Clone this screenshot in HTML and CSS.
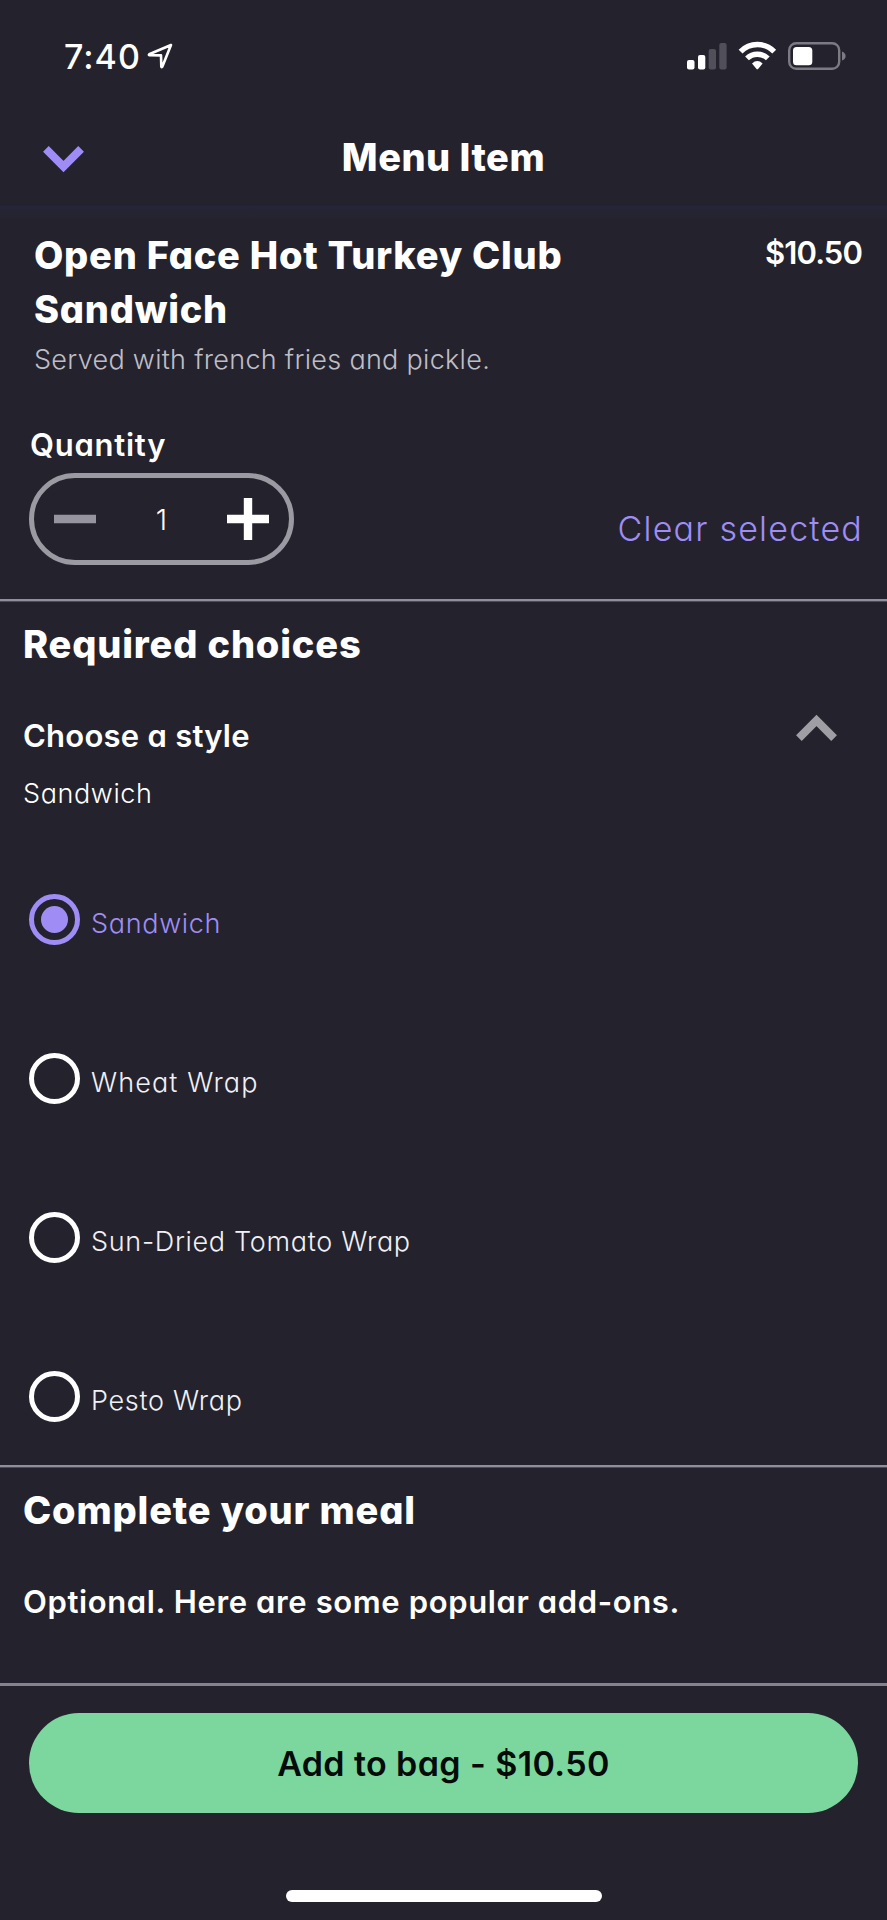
FILE: index.html
```html
<!DOCTYPE html>
<html lang="en">
<head>
<meta charset="utf-8">
<title>Menu Item</title>
<link rel="stylesheet" href="styles.css">
</head>
<body>
<div class="screen">
  <header class="top">
    <div class="status">
      <span class="time">7:40</span>
      <svg class="location" width="26" height="26" viewBox="0 0 26 26"><path d="M24 2 L2.2 11.3 Q1.5 12 2.4 12.2 L14 12.4 L14.3 23.6 Q14.8 24.6 15.4 23.6 Z" fill="none" stroke="#fff" stroke-width="2.6" stroke-linejoin="round"/></svg>
      <svg class="indicators" width="162" height="32" viewBox="0 0 162 32">
        <g fill="#fff"><rect x="1" y="20" width="7.5" height="9.5" rx="2"/><rect x="12" y="15" width="7.3" height="14.5" rx="2"/></g>
        <g fill="#504f5a"><rect x="22.7" y="9" width="7.3" height="20.5" rx="2"/><rect x="33.3" y="3" width="7.3" height="26.5" rx="2"/></g>
        <g fill="none" stroke="#fff" stroke-width="5.4"><path d="M54.6 11.6 A23.5 23.5 0 0 1 88.2 11.6"/><path d="M61 18.4 A15 15 0 0 1 81.8 18.4"/></g>
        <path d="M66 23.4 Q71.3 18.6 76.6 23.4 L72.3 28.7 Q71.3 29.8 70.3 28.7 Z" fill="#fff"/>
        <rect x="103.2" y="3.2" width="50" height="25.6" rx="7" fill="none" stroke="#7c7b84" stroke-width="2.4"/>
        <rect x="107" y="7" width="19.3" height="18.3" rx="3.6" fill="#fff"/>
        <path d="M156 11.5 Q159.6 13 159.6 16 Q159.6 19 156 20.5 Z" fill="#7c7b84"/>
      </svg>
    </div>
    <nav class="nav">
      <svg class="back" width="41" height="27" viewBox="0 0 41 27"><path d="M2.9 2.9 L20.5 20.5 L38.1 2.9" fill="none" stroke="#9f8df5" stroke-width="8"/></svg>
      <h1 class="nav-title">Menu Item</h1>
    </nav>
  </header>

  <section class="item">
    <div class="item-head">
      <h2 class="item-name">Open Face Hot Turkey Club<br>Sandwich</h2>
      <span class="price">$10.50</span>
    </div>
    <p class="served">Served with french fries and pickle.</p>
    <h3 class="label quantity">Quantity</h3>
    <div class="quantity-row">
      <div class="stepper">
        <svg width="42" height="42" viewBox="0 0 42 42"><path d="M0 21H42" stroke="#96949e" stroke-width="8.4"/></svg>
        <span class="count">1</span>
        <svg width="42" height="42" viewBox="0 0 42 42"><path d="M0 21H42M21 0V42" stroke="#fff" stroke-width="8.4"/></svg>
      </div>
      <a class="clear">Clear selected</a>
    </div>
  </section>

  <section class="choices">
    <h2 class="heading">Required choices</h2>
    <div class="group">
      <h3 class="label group-name">Choose a style</h3>
      <svg class="collapse" width="41" height="27" viewBox="0 0 41 27"><path d="M2.9 24.1 L20.5 6.5 L38.1 24.1" fill="none" stroke="#a09ea5" stroke-width="8"/></svg>
    </div>
    <p class="current">Sandwich</p>
    <ul class="options">
      <li class="option selected"><i class="radio"></i><span>Sandwich</span></li>
      <li class="option wide"><i class="radio"></i><span>Wheat Wrap</span></li>
      <li class="option"><i class="radio"></i><span>Sun-Dried Tomato Wrap</span></li>
      <li class="option"><i class="radio"></i><span>Pesto Wrap</span></li>
    </ul>
  </section>

  <section class="meal">
    <h2 class="heading">Complete your meal</h2>
    <h3 class="label addons">Optional. Here are some popular add-ons.</h3>
  </section>

  <footer class="footer">
    <button class="add">Add to bag - $10.50</button>
    <div class="home"></div>
  </footer>
</div>
</body>
</html>
```

FILE: styles.css
```css
* { box-sizing: border-box; margin: 0; padding: 0; }
body {
  background: #24232d;
  color: #fff;
  font-family: Inter, "Open Sans", sans-serif;
  font-feature-settings: "cv11", "ss03";
}
.screen { width: 887px; height: 1920px; display: flex; flex-direction: column; }
svg { display: block; flex: none; }
.top { height: 206px; }
.status { height: 112px; padding: 36px 39px 0 64px; display: flex; align-items: flex-start; }
.time { font-size: 34px; line-height: 41px; font-weight: 500; letter-spacing: 1px; }
.location { margin: 7px 0 0 6px; }
.indicators { margin: 4px 0 0 auto; }
.nav { height: 90px; padding: 0 43px; display: grid; grid-template-columns: 41px 1fr 41px; align-items: center; }
.back { margin-top: 4px; }
.nav-title { font-size: 38px; line-height: 48px; font-weight: 800; letter-spacing: 0.5px; text-align: center; }
.item { height: 395px; padding: 23px 25px 0 34px; border-bottom: 2px solid #918f9d; box-shadow: 0 1px #4e4c59; background: linear-gradient(#262538, #24232d 14px); }
.item-head { display: flex; justify-content: space-between; }
.item-name { font-size: 38px; line-height: 53.5px; font-weight: 800; letter-spacing: 0.75px; }
.price { margin-top: 2px; font-size: 31px; line-height: 44px; font-weight: 600; letter-spacing: -0.9px; }
.served { margin-top: 6px; font-size: 27px; line-height: 36px; font-weight: 300; letter-spacing: 0.29px; color: #bfbdc6; }
.label { font-size: 31px; line-height: 40px; font-weight: 600; letter-spacing: 0.62px; }
.quantity { margin: 47px 0 8px -4px; letter-spacing: 0.75px; }
.quantity-row { margin-left: -5px; display: flex; justify-content: space-between; align-items: flex-start; }
.stepper { width: 265px; height: 92px; padding: 0 20px; border: 5px solid #9b99a2; border-radius: 46px; display: flex; align-items: center; justify-content: space-between; }
.count { font-size: 29px; font-weight: 300; }
.clear { margin: 34px -1px 0 0; font-size: 34px; line-height: 44px; font-weight: 300; letter-spacing: 1.2px; color: #9f8df5; }
.choices { height: 866px; padding: 19px 50px 0 23px; border-bottom: 2px solid #918f9d; box-shadow: 0 1px #4e4c59; }
.heading { font-size: 38px; line-height: 48px; font-weight: 800; letter-spacing: 0.83px; }
.group { margin-top: 48px; display: flex; justify-content: space-between; align-items: flex-start; }
.group-name { letter-spacing: 0.25px; }
.collapse { margin-top: -2px; }
.current { margin-top: 20px; font-size: 27px; line-height: 36px; font-weight: 300; letter-spacing: 0.6px; }
.options { margin: 82px 0 0 6px; list-style: none; display: flex; flex-direction: column; gap: 108px; }
.option { height: 51px; display: flex; gap: 11px; font-size: 27px; line-height: 36px; font-weight: 300; letter-spacing: 0.68px; color: #f1f0f5; }
.option span { margin-top: 12px; }
.wide { letter-spacing: 1.1px; }
.radio { width: 51px; height: 51px; border: 5px solid #fff; border-radius: 50%; display: grid; place-items: center; }
.selected { color: #9f8df5; }
.selected .radio { border-color: #9f8df5; }
.selected .radio::after { content: ""; width: 27px; height: 27px; border-radius: 50%; background: #9f8df5; }
.meal { height: 219px; padding: 19px 23px 0; border-bottom: 3px solid #858391; }
.addons { margin-top: 48px; }
.footer { height: 234px; padding: 27px 29px 0; display: flex; flex-direction: column; align-items: center; }
.add { width: 829px; height: 100px; border: 0; border-radius: 50px; background: #7bd79d; color: #060a08; font: inherit; font-size: 34px; font-weight: 600; letter-spacing: 0.4px; }
.home { margin-top: 77px; width: 316px; height: 12px; border-radius: 6px; background: #fff; }
```
